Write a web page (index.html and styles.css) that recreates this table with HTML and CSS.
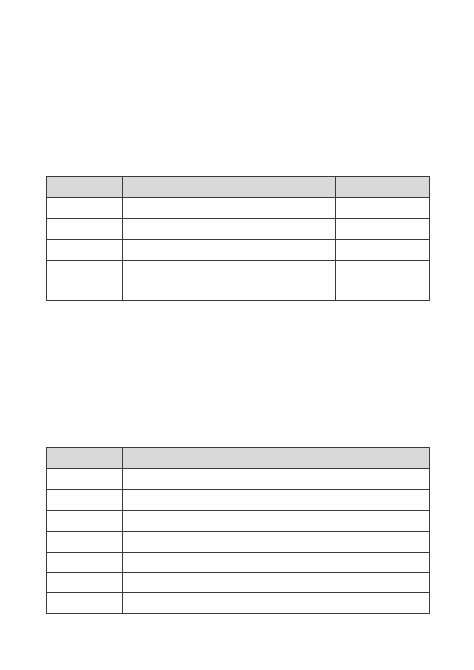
FILE: index.html
```html
<!DOCTYPE html>
<html lang="en">
<head>
<meta charset="utf-8">
<title>Document page</title>
<link rel="stylesheet" href="styles.css">
</head>
<body>
<main class="page">
  <table class="grid grid-a">
    <colgroup>
      <col class="c1"><col class="c2"><col class="c3">
    </colgroup>
    <thead>
      <tr class="head"><th></th><th></th><th></th></tr>
    </thead>
    <tbody>
      <tr class="row"><td></td><td></td><td></td></tr>
      <tr class="row"><td></td><td></td><td></td></tr>
      <tr class="row"><td></td><td></td><td></td></tr>
      <tr class="row tall"><td></td><td></td><td></td></tr>
    </tbody>
  </table>

  <table class="grid grid-b">
    <colgroup>
      <col class="c1"><col class="c2b">
    </colgroup>
    <thead>
      <tr class="head"><th></th><th></th></tr>
    </thead>
    <tbody>
      <tr class="row"><td></td><td></td></tr>
      <tr class="row"><td></td><td></td></tr>
      <tr class="row"><td></td><td></td></tr>
      <tr class="row"><td></td><td></td></tr>
      <tr class="row short"><td></td><td></td></tr>
      <tr class="row short"><td></td><td></td></tr>
      <tr class="row"><td></td><td></td></tr>
    </tbody>
  </table>
</main>
</body>
</html>
```
FILE: styles.css
```css
html, body {
  margin: 0;
  padding: 0;
  background: #ffffff;
}

body {
  font-family: "Liberation Sans", Arial, sans-serif;
}

.page {
  width: 474px;
  height: 670px;
  padding: 176px 0 0 46px;
  box-sizing: border-box;
}

.grid {
  border-collapse: collapse;
  table-layout: fixed;
  width: 383px;
}

.grid th,
.grid td {
  border: 1px solid #3a3a3a;
  padding: 0;
}

.grid th {
  background: #d9d9d9;
}

.c1 { width: 76px; }
.c2 { width: 213px; }
.c3 { width: 94px; }
.c2b { width: 307px; }

.head { height: 21px; }
.row { height: 21px; }
.short { height: 20px; }
.tall { height: 40px; }

.grid-b {
  margin-top: 146px;
}
```
